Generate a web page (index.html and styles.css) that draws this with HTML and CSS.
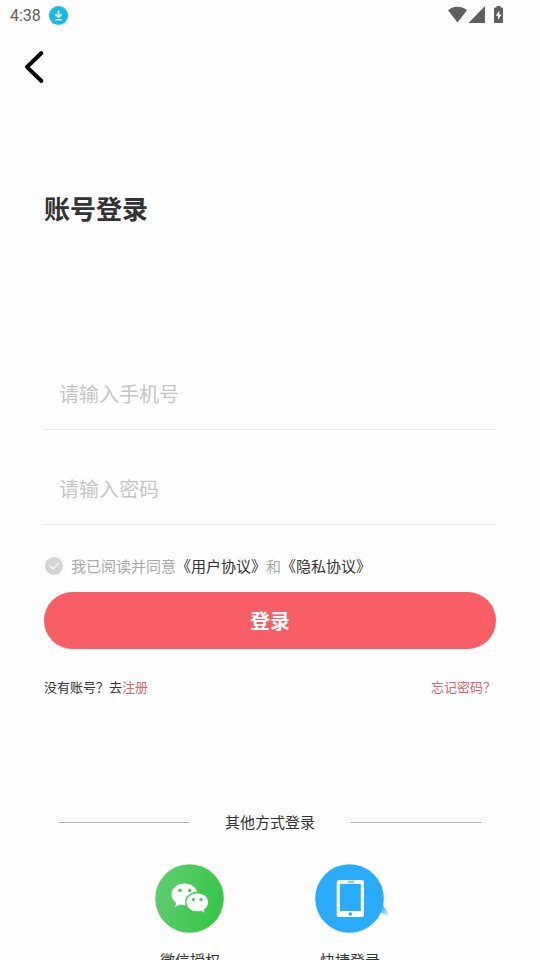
FILE: index.html
```html
<!DOCTYPE html>
<html lang="zh-CN">
<head>
<meta charset="utf-8">
<meta name="viewport" content="width=device-width, initial-scale=1">
<title>账号登录</title>
<link rel="stylesheet" href="styles.css">
</head>
<body>
<div class="status">
  <span class="clock">4:38</span>
  <svg class="download" width="20" height="20" viewBox="0 0 20 20" aria-hidden="true">
    <circle cx="10.500" cy="9.500" r="9.600" fill="#19b9f0"/>
    <path d="M10.500 4.200v7M7.300 8.100l3.200 3.200 3.200-3.200M7.100 13.800h6.800" fill="none" stroke="#fff" stroke-width="1.500"/>
  </svg>
  <svg class="signals" width="58" height="20" viewBox="0 0 58 20" aria-hidden="true">
    <g fill="#606060">
      <path d="M0 4.200C5.500-.3 13.500-.3 19 4.200L9.500 16.500z"/>
      <path d="M37 0v17H20.500z"/>
      <path d="M48.500 0h4v1.500H54q1 0 1 1V16q0 1-1 1h-7q-1 0-1-1V2.500q0-1 1-1h1.500z"/>
    </g>
    <path d="M51.300 4.500l-3.500 5.300h2.200v4.200l3.500-5.400h-2.200z" fill="#fff"/>
  </svg>
</div>

<header class="topbar">
  <button class="back" type="button" aria-label="返回">
    <svg width="22" height="34" viewBox="0 0 22 34" aria-hidden="true">
      <path d="M18.400 3L4 17l14.400 14" fill="none" stroke="#000" stroke-width="3.900" stroke-linecap="round" stroke-linejoin="round"/>
    </svg>
  </button>
</header>

<main class="page">
  <h1 class="title">账号登录</h1>
  <form class="form">
    <input class="field" type="tel" placeholder="请输入手机号" aria-label="手机号">
    <input class="field" type="password" placeholder="请输入密码" aria-label="密码">
    <div class="agree">
      <input class="check" type="checkbox" id="agree">
      <label for="agree">我已阅读并同意</label><a class="doc" href="#">《用户协议》</a><span>和</span><a class="doc" href="#">《隐私协议》</a>
    </div>
    <button class="submit" type="submit">登录</button>
  </form>
  <div class="links">
    <span>没有账号？去<a href="#">注册</a></span>
    <a href="#">忘记密码？</a>
  </div>

  <div class="divider">其他方式登录</div>

  <div class="social">
    <a class="way" href="#">
      <svg width="70" height="70" viewBox="0 0 70 70" aria-hidden="true">
        <defs>
          <linearGradient id="green" x1="0" y1="0.300" x2="1" y2="0.600">
            <stop offset="0" stop-color="#60cd70"/>
            <stop offset="1" stop-color="#36c646"/>
          </linearGradient>
        </defs>
        <circle cx="34.500" cy="34.500" r="34.300" fill="url(#green)"/>
        <path d="M29.500 19.500c-7.300 0-13 4.800-13 10.900 0 3.500 1.800 6.400 4.700 8.400l-1.300 4.400 5-2.700c1.500.5 3 .7 4.600.7 7.200 0 13-4.800 13-10.800s-5.800-10.900-13-10.900z" fill="#fff"/>
        <path d="M42.200 28.500c-6.300 0-11.400 4.200-11.400 9.700s5.100 9.800 11.400 9.800c1.400 0 2.700-.2 3.900-.6l4.300 2.500-1.100-3.900c2.700-1.800 4.300-4.600 4.300-7.800 0-5.500-5.100-9.700-11.400-9.700z" fill="#fff" stroke="#48c95a" stroke-width="1.300"/>
        <g fill="#48c95a">
          <circle cx="25" cy="26.500" r="1.800"/><circle cx="34.700" cy="26.500" r="1.800"/>
          <circle cx="38.400" cy="35.500" r="1.600"/><circle cx="46" cy="35.500" r="1.600"/>
        </g>
      </svg>
      <span>微信授权</span>
    </a>
    <a class="way" href="#">
      <svg width="70" height="70" viewBox="0 0 70 70" aria-hidden="true">
        <defs>
          <linearGradient id="tail" x1="0" y1="0" x2="1" y2="1">
            <stop offset="0.200" stop-color="#2aa9fb"/>
            <stop offset="0.900" stop-color="#2aa9fb" stop-opacity="0"/>
          </linearGradient>
        </defs>
        <path d="M67 40l9 13-12-5z" fill="url(#tail)"/>
        <circle cx="34.500" cy="34.500" r="34.300" fill="#2aabfc"/>
        <rect x="21.700" y="16" width="27.300" height="37" rx="2.500" fill="#fff"/>
        <path d="M24.800 20h21v27h-21z" fill="#2aabfc"/>
        <path d="M33 18h6" stroke="#2aabfc" stroke-width="1.200"/>
        <circle cx="35.300" cy="50" r="1.800" fill="#2aabfc"/>
      </svg>
      <span>快捷登录</span>
    </a>
  </div>
</main>
</body>
</html>
```
FILE: styles.css
```css
* {
  box-sizing: border-box;
}

body {
  margin: 0;
  height: 100vh;
  overflow: hidden;
  background: #fefefe;
  color: #333;
  font-family: "Noto Sans CJK SC", sans-serif;
  font-size: 15px;
  line-height: 24px;
}

a {
  color: #d9636c;
  text-decoration: none;
}

button,
input {
  margin: 0;
  border: 0;
  padding: 0;
  background: none;
  font: inherit;
}

svg {
  display: block;
  overflow: visible;
}

.status {
  display: flex;
  align-items: center;
  height: 32px;
  padding: 0 34px 0 10px;
}

.clock {
  color: #606060;
  font-family: Roboto, sans-serif;
  font-size: 16px;
}

.download {
  margin-left: 7px;
}

.signals {
  margin-left: auto;
}

.topbar {
  display: flex;
  padding: 18px 23px;
}

.page {
  padding: 87px 44px 0;
}

.title {
  margin: 0;
  font-size: 26px;
  line-height: 38px;
}

.form {
  display: flex;
  flex-direction: column;
  margin-top: 131px;
}

.field {
  width: 100%;
  height: 72px;
  border-bottom: 1px solid #e9e9e9;
  border-radius: 0;
  padding: 0 15px;
  font-size: 20px;
  outline: 0;
}

.field + .field {
  margin-top: 23px;
}

.field::placeholder {
  color: #c6c6c6;
}

.agree {
  display: flex;
  align-items: center;
  margin-top: 29px;
  color: #aaa;
}

.check {
  appearance: none;
  display: grid;
  place-items: center;
  width: 18px;
  height: 18px;
  margin: 0 8px 0 1px;
  border-radius: 50%;
  background: #d4d4d4;
}

.check::before {
  content: "";
  width: 8px;
  height: 4px;
  margin-bottom: 3px;
  border: solid #fff;
  border-width: 0 0 1px 1px;
  transform: rotate(-45deg);
}

.check:checked {
  background: #f95d66;
}

.doc {
  color: #333;
}

.submit {
  height: 57px;
  margin-top: 14px;
  border-radius: 29px;
  background: #f95d66;
  color: #fff;
  font-size: 20px;
  font-weight: 700;
}

.links {
  display: flex;
  justify-content: space-between;
  margin-top: 26px;
  font-size: 13px;
}

.divider {
  display: flex;
  align-items: center;
  gap: 36px;
  margin: 111px 15px 0;
}

.divider::before,
.divider::after {
  content: "";
  flex: 1;
  height: 1px;
  background: #b2b2b2;
}

.social {
  display: flex;
  justify-content: center;
  margin-top: 30px;
}

.way {
  display: flex;
  flex-direction: column;
  align-items: center;
  gap: 14px;
  width: 160px;
  color: #333;
}
```
